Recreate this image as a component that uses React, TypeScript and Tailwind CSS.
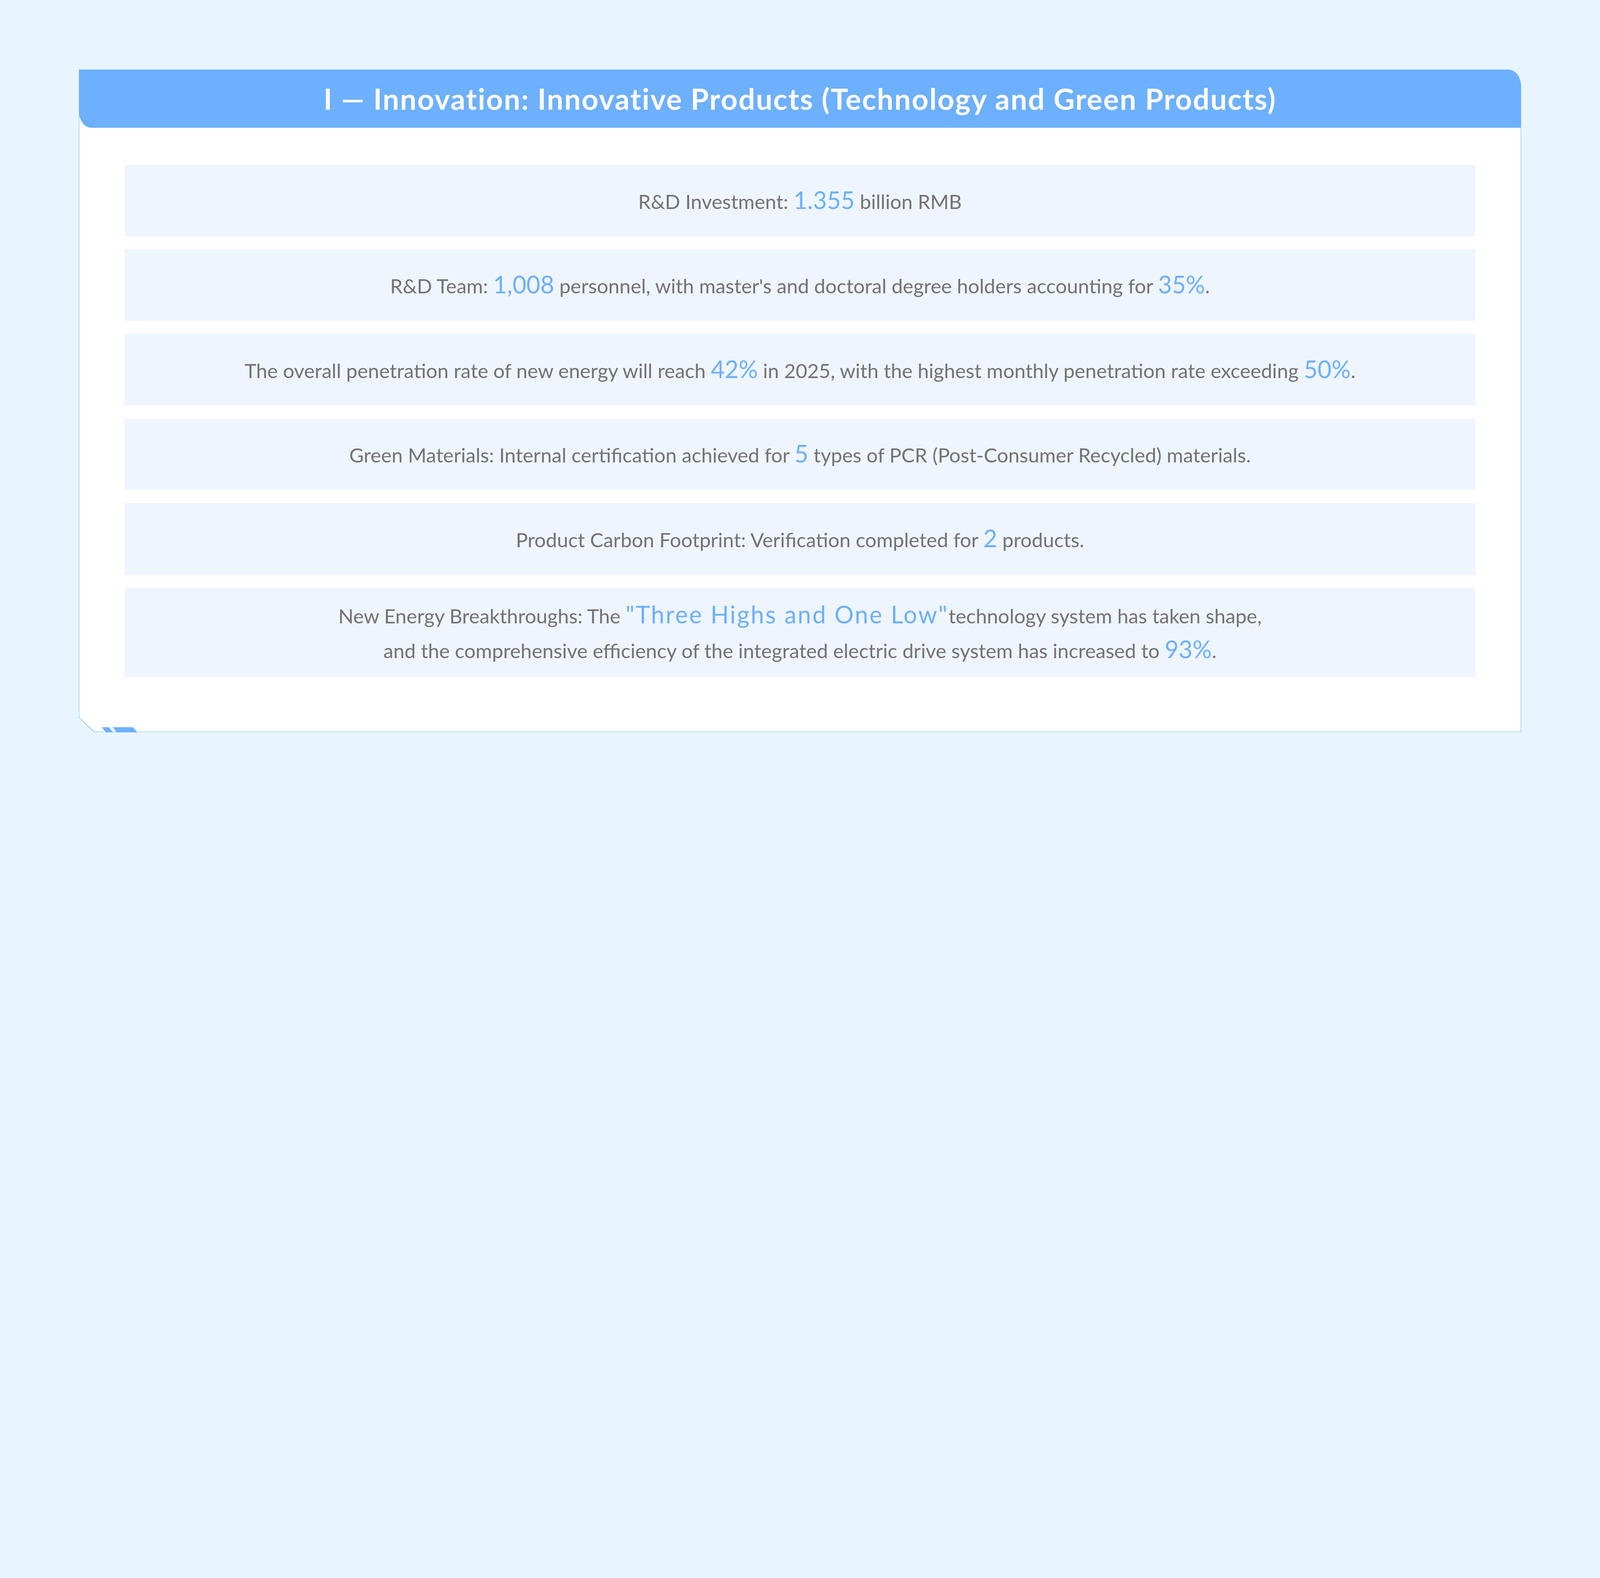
import React from "react";

function Num({ children, wide }: { children: React.ReactNode; wide?: boolean }) {
  return (
    <span className={wide ? "text-[1.5vw] tracking-[0.08vw] text-[#6cb0fe]" : "text-[1.5vw] text-[#6cb0fe]"}>
      {children}
    </span>
  );
}

function Row({ children }: { children: React.ReactNode }) {
  return (
    <div className="min-h-[4.4625vw] bg-[#eef5fe] flex items-center justify-center text-center py-[0.625vw]">
      <p className="text-[1.25vw] leading-[2.075vw] text-[#747272]">{children}</p>
    </div>
  );
}

export default function App() {
  return (
    <div className="w-full min-h-screen h-[50.5vw] overflow-hidden bg-[#e9f5fe] pt-[4.3375vw] font-['Lato','Liberation_Sans',sans-serif]">
      <div className="mx-auto w-[90.125vw] flex flex-col">
        <div className="relative z-10 h-[3.65vw] bg-[#6cb0fe] rounded-tr-[0.8vw_1.05vw] rounded-bl-[0.75vw_1.05vw] flex items-center justify-center">
          <h1 className="text-[1.825vw] font-bold leading-none tracking-[0.056vw] text-[#fffaf8] whitespace-nowrap">
            I — Innovation: Innovative Products (Technology and Green Products)
          </h1>
        </div>
        <div className="relative -mt-[1.0375vw] bg-white border-[0.0375vw] border-[#7ab8fd] pt-[3.325vw] pb-[3.4vw] px-[2.8375vw] flex flex-col gap-[0.825vw]">
          <Row>
            R&amp;D Investment: <Num>1.355</Num> billion RMB
          </Row>
          <Row>
            R&amp;D Team: <Num>1,008</Num> personnel, with master's and doctoral degree holders accounting for <Num>35%</Num>.
          </Row>
          <Row>
            The overall penetration rate of new energy will reach <Num>42%</Num> in 2025, with the highest monthly penetration rate exceeding <Num>50%</Num>.
          </Row>
          <Row>
            Green Materials: Internal certification achieved for <Num>5</Num> types of PCR (Post-Consumer Recycled) materials.
          </Row>
          <Row>
            Product Carbon Footprint: Verification completed for <Num>2</Num> products.
          </Row>
          <Row>
            New Energy Breakthroughs: The <Num wide>"Three Highs and One Low"</Num>technology system has taken shape,
            <br />
            and the comprehensive efficiency of the integrated electric drive system has increased to <Num>93%</Num>.
          </Row>
          <svg
            className="absolute -left-[0.0375vw] -bottom-[0.0375vw] w-[3.75vw] h-[1.125vw]"
            viewBox="0 0 300 90"
          >
            <polygon points="0,16 0,90 78,90" fill="#e9f5fe" />
            <line x1="1.5" y1="16" x2="78" y2="88.5" stroke="#7ab8fd" strokeWidth="3" />
            <polygon points="114,64 150,64 171,90 135,90" fill="#6cb0fe" />
            <polygon points="169,64 271,64 292,90 189,90" fill="#6cb0fe" />
          </svg>
        </div>
      </div>
    </div>
  );
}
